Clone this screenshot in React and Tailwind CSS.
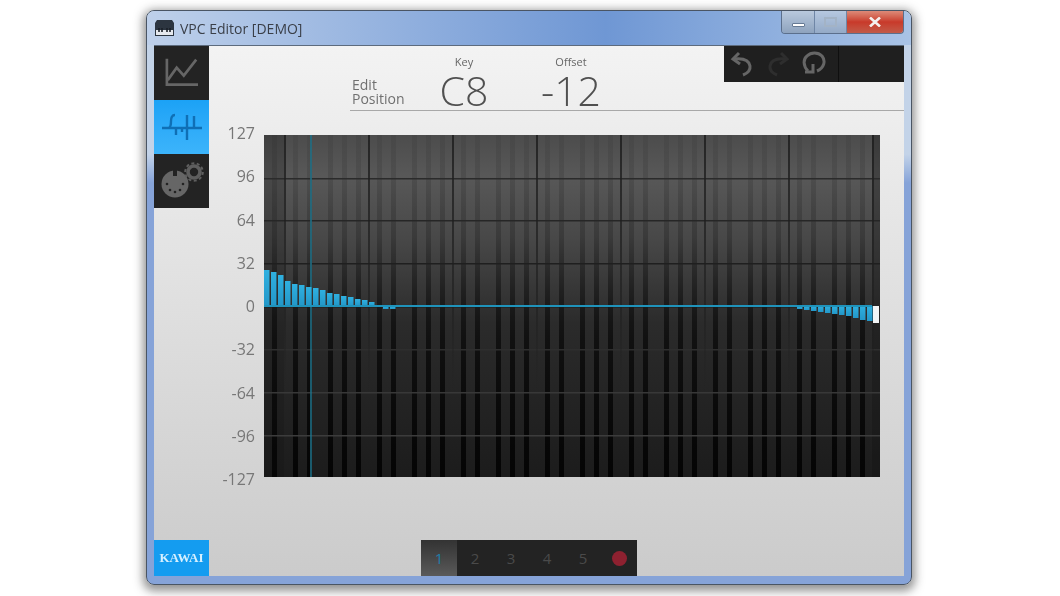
import React from 'react';

const CHART_W = 616;
const CHART_H = 342;
const ZERO = 171;
const KEY_W = 7;

// bar heights in px per key, left end of the keyboard is positive, right end negative
const leftBars = [36, 34, 31, 25, 22, 21, 19, 18, 16, 13, 12, 10, 9, 7, 6, 4, 0, -3, -3];
const rightBars = [-3, -4, -5, -6, -7, -8, -9, -10, -12, -14, -15];
const blackNotes = [1, 3, 6, 8, 10];
const keys = Array.from({ length: 88 }, (_, i) => i);
const labels = ['127', '96', '64', '32', '0', '-32', '-64', '-96', '-127'];
// horizontal lines are dark on the light top half, light on the dark bottom half
const gridY = [
  [43, '#2b2b2b'],
  [85, '#262626'],
  [128, '#1f1f1f'],
  [171, '#1a1a1a'],
  [214, '#2e2e2e'],
  [257, '#383838'],
  [300, '#3c3c3c'],
];
const gridX = [20, 104, 188, 272, 356, 440, 524, 608];

const Chart = () => (
  <svg width={CHART_W} height={CHART_H} viewBox={`0 0 ${CHART_W} ${CHART_H}`} className="block shrink-0">
    <defs>
      <linearGradient id="bg" x1="0" y1="0" x2="0" y2="1">
        <stop offset="0" stopColor="#4c4c4c" />
        <stop offset="0.12" stopColor="#585858" />
        <stop offset="0.3" stopColor="#484848" />
        <stop offset="0.55" stopColor="#2b2b2b" />
        <stop offset="1" stopColor="#1c1c1c" />
      </linearGradient>
      <linearGradient id="blackKey" x1="0" y1="0" x2="0" y2="1">
        <stop offset="0" stopColor="#000000" stopOpacity="0.06" />
        <stop offset="0.3" stopColor="#000000" stopOpacity="0.2" />
        <stop offset="0.6" stopColor="#000000" stopOpacity="0.6" />
        <stop offset="1" stopColor="#000000" stopOpacity="0.85" />
      </linearGradient>
      <linearGradient id="gridLine" x1="0" y1="0" x2="0" y2="1">
        <stop offset="0" stopColor="#1e1e1e" stopOpacity="0.85" />
        <stop offset="0.5" stopColor="#1e1e1e" stopOpacity="0.6" />
        <stop offset="0.75" stopColor="#1e1e1e" stopOpacity="0" />
      </linearGradient>
      <linearGradient id="bar" x1="0" y1="0" x2="0" y2="1">
        <stop offset="0" stopColor="#2fb0e0" />
        <stop offset="1" stopColor="#2397c8" />
      </linearGradient>
    </defs>
    <rect width={CHART_W} height={CHART_H} fill="url(#bg)" />
    {keys.map((i) =>
      blackNotes.includes((i + 9) % 12) ? (
        <rect key={i} x={i * KEY_W + 1} y="0" width={KEY_W - 2} height={CHART_H} fill="url(#blackKey)" />
      ) : null
    )}
    <rect x="0" y="0" width="20" height={CHART_H} fill="#111111" opacity="0.2" />
    <rect x="608" y="0" width="8" height={CHART_H} fill="#111111" opacity="0.3" />
    {gridY.map(([y, color]) => (
      <rect key={y} x="0" y={y} width={CHART_W} height="1.5" fill={color} />
    ))}
    {gridX.map((x) => (
      <rect key={x} x={x} y="0" width="2" height={CHART_H} fill="url(#gridLine)" />
    ))}
    <rect x="46" y="0" width="2" height={CHART_H} fill="#1f6f86" opacity="0.8" />
    {leftBars.map((h, i) => (
      <rect
        key={i}
        x={i * KEY_W}
        y={h > 0 ? ZERO - h : ZERO}
        width={KEY_W - 1.5}
        height={Math.abs(h)}
        fill="url(#bar)"
      />
    ))}
    {rightBars.map((h, i) => (
      <rect key={i} x={(76 + i) * KEY_W + 1} y={ZERO} width={KEY_W - 1.5} height={-h} fill="url(#bar)" />
    ))}
    <rect x="609" y={ZERO} width="6" height="17" fill="#f2f5f6" />
    <rect x="0" y={ZERO - 1} width="608" height="2" fill="#1f93bb" />
  </svg>
);

const GraphIcon = () => (
  <svg width="36" height="32" viewBox="0 0 40 36" fill="none" stroke="#666666" strokeWidth="3">
    <path d="M3 2V31H38" />
    <path d="M4 26 14 12l8 9L36 3" />
  </svg>
);

const WaveIcon = () => (
  <svg width="42" height="32" viewBox="0 0 42 32" fill="none" stroke="#0f6fb5" strokeWidth="2.4">
    <path d="M1 17H41" />
    <path d="M8 17c2-1 2-4 2-7s1-6 4-6" />
    <path d="M15 17v7M21 17v4M26 4v25M33 5v12" />
  </svg>
);

const MidiIcon = () => (
  <svg width="48" height="40" viewBox="0 0 48 40" fill="none">
    <circle cx="17" cy="23" r="13.5" fill="#666666" />
    <rect x="15" y="8" width="4" height="7" fill="#232323" />
    <g fill="#232323">
      <circle cx="9" cy="23" r="1.3" />
      <circle cx="25" cy="23" r="1.3" />
      <circle cx="12" cy="29" r="1.3" />
      <circle cx="22" cy="29" r="1.3" />
      <circle cx="17" cy="31" r="1.3" />
    </g>
    <circle cx="36" cy="11" r="6" stroke="#5e5e5e" strokeWidth="3.6" />
    <circle cx="36" cy="11" r="8.8" stroke="#5e5e5e" strokeWidth="2" strokeDasharray="3 2.5" />
  </svg>
);

const PianoIcon = () => (
  <svg width="19" height="18" viewBox="0 0 19 18">
    <path d="M2 1h15l2 3v13H0V4z" fill="#2c3540" />
    <rect x="1" y="11" width="17" height="5" fill="#e6e9ee" />
    <path d="M4 9v4M7 9v4M12 9v4M15 9v4" stroke="#1b2027" strokeWidth="1.6" />
  </svg>
);

const UndoIcon = ({ stroke }) => (
  <svg width="24" height="28" viewBox="0 0 24 28" fill="none" stroke={stroke} strokeWidth="3">
    <path d="M9 3 3 9l7 5" />
    <path d="M3 9c8-1 16 0 17 7 .6 4-2 7-7 9" />
  </svg>
);

const RedoIcon = () => (
  <svg width="24" height="28" viewBox="0 0 24 28" fill="none" stroke="#2e2e2e" strokeWidth="3">
    <path d="M15 3l6 6-7 5" />
    <path d="M21 9C13 8 5 9 4 16c-.6 4 2 7 7 9" />
  </svg>
);

const ResetIcon = () => (
  <svg width="24" height="28" viewBox="0 0 24 28" fill="none" stroke="#666666" strokeWidth="3">
    <path d="M6 21C1 16 1 9 5 6c4-4 11-4 15 0 4 5 2 12-5 15" />
    <path d="M11 14v8H3" />
  </svg>
);

const App = () => {
  return (
    <div className="w-[1060px] h-[596px] bg-white pl-[146px] pt-[10px] overflow-hidden font-['Open_Sans',sans-serif]">
      <div className="blur-[0.7px] w-[766px] h-[575px] flex flex-col rounded-lg border border-[#4a5564] bg-gradient-to-b from-[#c3d3e8] from-25% to-[#86a3d8] to-30% shadow-[0_3px_10px_3px_rgba(40,40,40,0.5)]">
        <div className="h-[34px] shrink-0 flex justify-between items-start pl-[8px] pr-[7px] rounded-t-lg bg-gradient-to-r from-[#bed0ea] via-[#6f97d4] via-60% to-[#a9c3e6]">
          <div className="flex items-center gap-[6px] h-[32px] pt-[2px]">
            <PianoIcon />
            <span className="text-[14px] text-[#3a3f48]">VPC Editor [DEMO]</span>
          </div>
          <div className="flex h-[23px] rounded-b-[4px] overflow-hidden border border-t-0 border-[#5b6f8c]">
            <div className="w-[33px] flex items-center justify-center border-r border-[#6f86a6] bg-gradient-to-b from-[#b9c9dd] to-[#8ea3be]">
              <div className="w-[13px] h-[4px] mt-[5px] bg-white rounded-[1px] border border-[#667a94]" />
            </div>
            <div className="w-[32px] flex items-center justify-center border-r border-[#6f86a6] bg-gradient-to-b from-[#b6c8e0] to-[#94aac7]">
              <div className="w-[13px] h-[10px] border-2 border-[#a3b3c6]" />
            </div>
            <div className="w-[56px] flex items-center justify-center bg-gradient-to-b from-[#dc8a78] via-[#c8392a] to-[#c25a48]">
              <svg width="12" height="10" viewBox="0 0 12 10" fill="none" stroke="#f4f0ee" strokeWidth="2.6">
                <path d="M1 0.5 11 9.5M11 0.5 1 9.5" />
              </svg>
            </div>
          </div>
        </div>

        <div className="h-[531px] mx-[7px] flex bg-gradient-to-b from-[#f3f3f3] to-[#cbcbcb] border-t border-[#5d6b7d]">
          <div className="w-[55px] shrink-0 flex flex-col">
            <div className="h-[54px] flex items-center justify-center bg-[#232323]">
              <GraphIcon />
            </div>
            <div className="h-[54px] flex items-center justify-center bg-gradient-to-b from-[#1ba2f6] to-[#3cb4fb]">
              <WaveIcon />
            </div>
            <div className="h-[54px] flex items-center justify-center bg-[#232323]">
              <MidiIcon />
            </div>
            <div className="mt-auto h-[36px] flex items-center justify-center bg-[#149cf0] font-['Liberation_Serif',serif] font-bold text-[13px] text-[#d6f0ff]">
              KAWAI
            </div>
          </div>

          <div className="flex-1 flex flex-col min-w-0">
            <div className="h-[65px] shrink-0 ml-[141px] flex border-b border-[#a8a8a8] text-[#666666]">
              <div className="w-[62px] pl-[2px] pt-[32px] text-[14px] leading-[14px] text-[#707070]">
                <div>Edit</div>
                <div>Position</div>
              </div>
              <div className="w-[104px] flex flex-col items-center pt-[9px]">
                <span className="text-[11px] leading-[14px]">Key</span>
                <span className="-mt-[2px] text-[41px] leading-[46px] font-light text-[#505050]">C8</span>
              </div>
              <div className="w-[110px] flex flex-col items-center pt-[9px]">
                <span className="text-[11px] leading-[14px]">Offset</span>
                <span className="-mt-[2px] text-[41px] leading-[46px] font-light text-[#505050]">-12</span>
              </div>
              <div className="ml-auto w-[180px] h-[36px] flex items-center bg-[#1f1f1f] pl-[6px]">
                <UndoIcon stroke="#666666" />
                <div className="ml-[12px]">
                  <RedoIcon />
                </div>
                <div className="ml-[12px]">
                  <ResetIcon />
                </div>
                <div className="ml-[12px] h-full w-px bg-[#0f0f0f]" />
              </div>
            </div>

            <div className="flex mt-[24px]">
              <div className="w-[55px] shrink-0 h-[366px] -mt-[12px] pr-[9px] flex flex-col justify-between items-end text-[16px] leading-[20px] text-[#777777]">
                {labels.map((label) => (
                  <span key={label}>{label}</span>
                ))}
              </div>
              <Chart />
            </div>

            <div className="mt-auto ml-[212px] w-[216px] h-[36px] flex bg-[#232323] text-[15px] text-[#4a4a4a]">
              <div className="w-[36px] flex items-center justify-center bg-gradient-to-b from-[#333333] to-[#5a5a5a] text-[#1f7ea8]">
                1
              </div>
              {['2', '3', '4', '5'].map((n) => (
                <div key={n} className="w-[36px] flex items-center justify-center">
                  {n}
                </div>
              ))}
              <div className="w-[36px] flex items-center justify-center">
                <div className="w-[15px] h-[15px] rounded-full bg-[#8e2130]" />
              </div>
            </div>
          </div>
        </div>
      </div>
    </div>
  );
};

export default App;
